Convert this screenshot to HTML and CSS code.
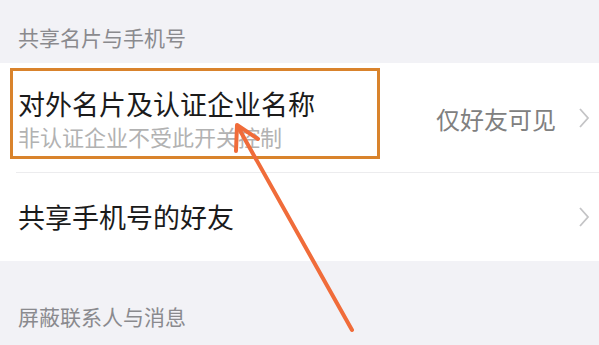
FILE: index.html
```html
<!DOCTYPE html>
<html>
    <head>
        <title>隐私</title>
        <link rel="stylesheet" href="styles.css">
    </head>
    <body>
        <div class="page">
            <div class="sectionTitle">共享名片与手机号</div>

            <div class="group">
                <div class="row rowTall">
                    <div class="rowText">
                        <div class="rowTitle">对外名片及认证企业名称</div>
                        <div class="rowSub">非认证企业不受此开关控制</div>
                    </div>
                    <div class="rowRight">
                        <span class="rowValue">仅好友可见</span>
                        <svg class="chevron" width="12" height="20" viewBox="0 0 12 20">
                            <polyline points="2,1 10,10 2,19" />
                        </svg>
                    </div>
                </div>
                <div class="row">
                    <div class="rowText">
                        <div class="rowTitle">共享手机号的好友</div>
                    </div>
                    <div class="rowRight">
                        <svg class="chevron" width="12" height="20" viewBox="0 0 12 20">
                            <polyline points="2,1 10,10 2,19" />
                        </svg>
                    </div>
                </div>
            </div>

            <div class="sectionTitle sectionLower">屏蔽联系人与消息</div>

            <!-- annotation drawn on top of the screenshot -->
            <div class="highlight"></div>
            <svg class="arrow" width="599" height="345" viewBox="0 0 599 345">
                <line x1="352" y1="330" x2="238" y2="127" />
                <polyline points="236,151 237,125 258,139" />
            </svg>
        </div>
    </body>
</html>
```

FILE: styles.css
```css
body{
    margin: 0;
    padding: 0;
    background-color: #f2f2f6;
    font-family: "Noto Sans CJK SC", "Noto Sans", sans-serif;
}

.page{
    position: relative;
    width: 599px;
    height: 345px;
    overflow: hidden;
}

.sectionTitle{
    height: 63px;
    box-sizing: border-box;
    padding: 25px 18px 0 18px;
    font-size: 21px;
    line-height: 24px;
    color: #8a8a8e;
}

.sectionLower{
    padding-top: 43px;
}

.group{
    background-color: #ffffff;
}

.row{
    display: flex;
    align-items: center;
    justify-content: space-between;
    height: 88px;
    padding: 0 9px 0 18px;
    position: relative;
}

.rowTall{
    height: 110px;
}

.rowTall::after{
    content: "";
    position: absolute;
    left: 16px;
    right: 0;
    bottom: 0;
    height: 1px;
    background-color: #ececee;
}

.rowText{
    display: flex;
    flex-direction: column;
}

.rowTitle{
    font-size: 27px;
    line-height: 30px;
    color: #1b1b1b;
}

.rowTall .rowTitle{
    margin-top: 2px;
}

.rowSub{
    margin-top: 4px;
    font-size: 22px;
    line-height: 26px;
    color: #b2b2b2;
}

.rowRight{
    display: flex;
    align-items: center;
}

.rowValue{
    font-size: 24px;
    color: #808080;
    margin-right: 22px;
}

.chevron polyline{
    fill: none;
    stroke: #c4c4c6;
    stroke-width: 1.8;
}

.highlight{
    position: absolute;
    left: 10px;
    top: 68px;
    width: 364px;
    height: 85px;
    border: 3px solid #d9832c;
}

.arrow{
    position: absolute;
    left: 0;
    top: 0;
}

.arrow line, .arrow polyline{
    fill: none;
    stroke: #f06c3a;
    stroke-width: 4;
    stroke-linecap: round;
    stroke-linejoin: round;
}
```
